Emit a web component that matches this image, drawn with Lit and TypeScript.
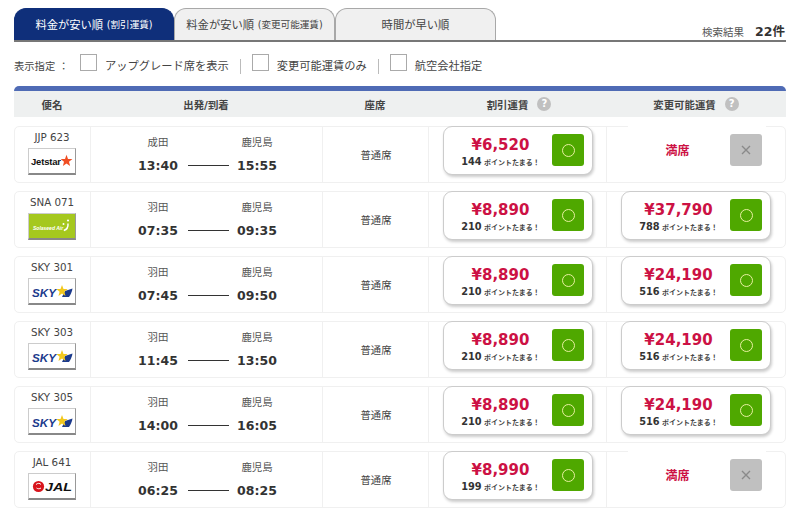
import { LitElement, html, css, svg } from "lit";
import { customElement } from "lit/decorators.js";

type Fare = { price: string; points: string } | null;
type Row = { code: string; logo: string; from: string; dep: string; arr: string; a: Fare; b: Fare };

const rows: Row[] = [
  { code: "JJP 623", logo: "jet", from: "成田", dep: "13:40", arr: "15:55", a: { price: "¥6,520", points: "144" }, b: null },
  { code: "SNA 071", logo: "sna", from: "羽田", dep: "07:35", arr: "09:35", a: { price: "¥8,890", points: "210" }, b: { price: "¥37,790", points: "788" } },
  { code: "SKY 301", logo: "sky", from: "羽田", dep: "07:45", arr: "09:50", a: { price: "¥8,890", points: "210" }, b: { price: "¥24,190", points: "516" } },
  { code: "SKY 303", logo: "sky", from: "羽田", dep: "11:45", arr: "13:50", a: { price: "¥8,890", points: "210" }, b: { price: "¥24,190", points: "516" } },
  { code: "SKY 305", logo: "sky", from: "羽田", dep: "14:00", arr: "16:05", a: { price: "¥8,890", points: "210" }, b: { price: "¥24,190", points: "516" } },
  { code: "JAL 641", logo: "jal", from: "羽田", dep: "06:25", arr: "08:25", a: { price: "¥8,990", points: "199" }, b: null },
];

const star = (cx: number, cy: number, r: number, fill: string) => {
  const pts: string[] = [];
  for (let i = 0; i < 10; i++) {
    const rad = i % 2 ? r * 0.42 : r;
    const t = -Math.PI / 2 + (i * Math.PI) / 5;
    pts.push(`${(cx + rad * Math.cos(t)).toFixed(1)},${(cy + rad * Math.sin(t)).toFixed(1)}`);
  }
  return svg`<polygon points=${pts.join(" ")} fill=${fill}></polygon>`;
};

const logos: Record<string, unknown> = {
  jet: html`<svg class="lg" viewBox="0 0 46 24">
    <text x="2" y="16" class="t-jet">Jetstar</text>${star(37.5, 12, 6.2, "#f04e23")}
  </svg>`,
  sna: html`<svg class="lg green" viewBox="0 0 46 24">
    <text x="4" y="16" class="t-sna">Solaseed Air</text>
    <path d="M39 9.5c.3 3.5-1 6-4.2 7" fill="none" stroke="#fff" stroke-width="1.5"></path>
    <circle cx="39" cy="6.5" r="1.1" fill="#fff"></circle>
    <circle cx="34.5" cy="10" r="1" fill="#fff"></circle>
  </svg>`,
  sky: html`<svg class="lg" viewBox="0 0 46 24">
    <path d="M33 18h7c1.500-2 3-5 3.500-8.500L36 12z" fill="#1b3a8c"></path>
    ${star(33, 12, 6, "#f2c81e")}
    <text x="3" y="17.500" class="t-sky" textLength="24" lengthAdjust="spacingAndGlyphs">SKY</text>
  </svg>`,
  jal: html`<svg class="lg" viewBox="0 0 46 24">
    <circle cx="9.500" cy="12.500" r="5.600" fill="#d8141c"></circle>
    <path d="M7 10.500c1.500-1.500 4-1.500 5 0M7.500 14c1.500 1 3 1 4.500 0" stroke="#fff" stroke-width="1" fill="none"></path>
    <text x="16" y="17" class="t-jal" textLength="27" lengthAdjust="spacingAndGlyphs">JAL</text>
  </svg>`,
};

@customElement("app-root")
export class AppRoot extends LitElement {
  static styles = css`
    :host {
      display: block;
      width: 800px;
      height: 513px;
      overflow: hidden;
      background: #fff;
      color: #333;
      font-family: "DejaVu Sans", "Noto Sans CJK JP", sans-serif;
      font-size: 11px;
      box-sizing: border-box;
      padding: 8px 14px 0;
    }
    .topbar {
      display: flex;
      align-items: flex-end;
      height: 34px;
      box-sizing: border-box;
      border-bottom: 2px solid #777;
    }
    .tab {
      width: 161px;
      height: 32px;
      box-sizing: border-box;
      background: #f0f0f0;
      border: 1px solid #a8a8a8;
      border-bottom: 0;
      border-radius: 12px 12px 0 0;
      display: flex;
      align-items: center;
      justify-content: center;
      padding-bottom: 2px;
      font-size: 11.3px;
      color: #444;
      white-space: pre;
    }
    .tab.on {
      width: 160px;
      background: #0f2f7a;
      border-color: #0f2f7a;
      color: #fff;
    }
    .tab small { font-size: 9.6px; }
    .result {
      margin-left: auto;
      display: flex;
      align-items: baseline;
      gap: 11px;
      color: #555;
      font-size: 10.5px;
      line-height: 15px;
    }
    .result b { font-size: 12.5px; color: #333; margin-right: 1px; }
    .filters {
      display: flex;
      align-items: center;
      height: 44px;
      box-sizing: border-box;
      padding-top: 5px;
      color: #444;
      font-size: 11.25px;
    }
    .filters .lab { width: 66px; font-size: 10.3px; white-space: pre; }
    .cb {
      width: 17px;
      height: 17px;
      box-sizing: border-box;
      border: 1px solid #aaa;
      background: #fff;
      margin-right: 8px;
      position: relative;
      top: -4px;
    }
    .sep {
      width: 1px;
      height: 15px;
      background: #bbb;
      margin: 0 11px 0 11px;
    }
    .filters span { line-height: 17px; }
    .thead {
      display: grid;
      grid-template-columns: 76px 232px 106px 178px 180px;
      height: 31px;
      box-sizing: border-box;
      border-top: 5px solid #4f6bb5;
      border-radius: 5px 5px 0 0;
      background: #eef0f0;
      align-items: center;
      text-align: center;
      font-weight: 700;
      font-size: 10.4px;
      color: #444;
    }
    .thead > div { display: flex; justify-content: center; align-items: center; gap: 9px; }
    .thead > .h4 { padding-left: 4px; }
    .q {
      width: 14px;
      height: 14px;
      border-radius: 50%;
      background: #c0c0c0;
      color: #fff;
      font-size: 10px;
      line-height: 14px;
      text-align: center;
    }
    .rows { display: flex; flex-direction: column; gap: 8.1px; margin-top: 9px; }
    .row {
      display: grid;
      grid-template-columns: 76px 232px 106px 178px 180px;
      height: 57px;
      box-sizing: border-box;
      border: 1px solid #f0f0f0;
      border-radius: 5px;
    }
    .cell { border-left: 1px solid #f0f0f0; margin-left: -1px; }
    .flight {
      display: flex;
      flex-direction: column;
      align-items: center;
      gap: 4px;
      padding: 3px 2px 0 0;
      font-size: 10.3px;
      line-height: 14px;
      color: #444;
    }
    .logo {
      width: 48px;
      height: 27px;
      box-sizing: border-box;
      border: 1px solid #ccc;
      border-right-color: #999;
      border-bottom: 2px solid #888;
      background: #fff;
    }
    .lg { display: block; width: 46px; height: 24px; }
    .lg.green { background: #a5c81e; }
    .t-jet { font: 700 9.5px "Liberation Sans", sans-serif; fill: #111; letter-spacing: -0.2px; }
    .t-sna { font: italic 700 5px "Liberation Sans", sans-serif; fill: #fff; }
    .t-sky { font: italic 900 11px "Liberation Sans", sans-serif; fill: #1b3a8c; }
    .t-jal { font: italic 900 11px "Liberation Sans", sans-serif; fill: #111; }
    .route {
      display: grid;
      grid-template-columns: 60px 41px 56px;
      grid-template-rows: auto auto;
      padding: 6px 0 0 37px;
      justify-items: center;
      align-content: start;
      box-sizing: border-box;
    }
    .place { font-size: 10.4px; color: #555; line-height: 18px; }
    .time { font-size: 12.5px; font-weight: 700; color: #333; line-height: 20px; margin-top: 5px; }
    .dash { width: 41px; height: 1px; background: #333; align-self: center; margin-top: 4px; }
    .seat {
      display: flex;
      align-items: center;
      justify-content: center;
      font-size: 10.3px;
      color: #444;
    }
    .fare { position: relative; }
    .card {
      position: absolute;
      left: 14px;
      top: -1px;
      width: 150px;
      height: 49px;
      box-sizing: border-box;
      background: #fff;
      border: 1px solid #ccc;
      border-radius: 9px;
      box-shadow: 1px 2px 3px rgba(0, 0, 0, 0.2);
    }
    .price {
      position: absolute;
      left: 0;
      width: 113px;
      top: 7px;
      text-align: center;
      font-size: 15px;
      font-weight: 700;
      color: #cc1144;
      line-height: 22px;
    }
    .pts {
      position: absolute;
      left: 0;
      width: 113px;
      top: 29px;
      text-align: center;
      font-size: 7px;
      font-weight: 700;
      color: #444;
      line-height: 12px;
      white-space: pre;
    }
    .pts b { font-size: 9.8px; color: #333; }
    .btn {
      position: absolute;
      left: 108px;
      top: 7px;
      width: 32px;
      height: 32px;
      border-radius: 3px;
      background: #4fa800;
      display: flex;
      align-items: center;
      justify-content: center;
    }
    .btn i {
      width: 13px;
      height: 13px;
      box-sizing: border-box;
      border: 1px solid #e8f0a0;
      border-radius: 50%;
      display: block;
    }
    .full { position: relative; }
    .mask {
      position: absolute;
      left: 21px;
      right: 21px;
      top: -2px;
      height: 2px;
      background: #fff;
    }
    .soldout {
      position: absolute;
      left: 14px;
      width: 113px;
      top: 15px;
      text-align: center;
      color: #cc1144;
      font-weight: 700;
      font-size: 12px;
      line-height: 18px;
    }
    .x {
      position: absolute;
      left: 123px;
      top: 7px;
      width: 32px;
      height: 32px;
      border-radius: 3px;
      background: #c0c0c0;
      display: flex;
      align-items: center;
      justify-content: center;
    }
    .x svg { width: 10px; height: 10px; }
  `;

  private fare(f: Fare) {
    if (!f) {
      return html`<div class="cell full">
        <div class="mask"></div>
        <div class="soldout">満席</div>
        <div class="x">
          <svg viewBox="0 0 10 10"><path d="M1 1l8 8M9 1l-8 8" stroke="#8a8a8a" stroke-width="1.4"></path></svg>
        </div>
      </div>`;
    }
    return html`<div class="cell fare">
      <div class="card">
        <div class="price">${f.price}</div>
        <div class="pts"><b>${f.points}</b> ポイントたまる！</div>
        <div class="btn"><i></i></div>
      </div>
    </div>`;
  }

  render() {
    return html`
      <div class="topbar">
        <div class="tab on">料金が安い順 <small>(割引運賃)</small></div>
        <div class="tab">料金が安い順 <small>(変更可能運賃)</small></div>
        <div class="tab">時間が早い順</div>
        <div class="result"><span>検索結果</span><b>22件</b></div>
      </div>
      <div class="filters">
        <span class="lab">表示指定 ：</span>
        <span class="cb"></span><span>アップグレード席を表示</span><span class="sep"></span>
        <span class="cb"></span><span>変更可能運賃のみ</span><span class="sep"></span>
        <span class="cb"></span><span>航空会社指定</span>
      </div>
      <div class="thead">
        <div>便名</div>
        <div>出発/到着</div>
        <div>座席</div>
        <div class="h4">割引運賃<span class="q">?</span></div>
        <div>変更可能運賃<span class="q">?</span></div>
      </div>
      <div class="rows">
        ${rows.map(
          (r) => html`<div class="row">
            <div class="flight">
              <span>${r.code}</span>
              <div class="logo">${logos[r.logo]}</div>
            </div>
            <div class="cell route">
              <span class="place">${r.from}</span><span></span><span class="place">鹿児島</span>
              <span class="time">${r.dep}</span><span class="dash"></span><span class="time">${r.arr}</span>
            </div>
            <div class="cell seat">普通席</div>
            ${this.fare(r.a)} ${this.fare(r.b)}
          </div>`
        )}
      </div>
    `;
  }
}
